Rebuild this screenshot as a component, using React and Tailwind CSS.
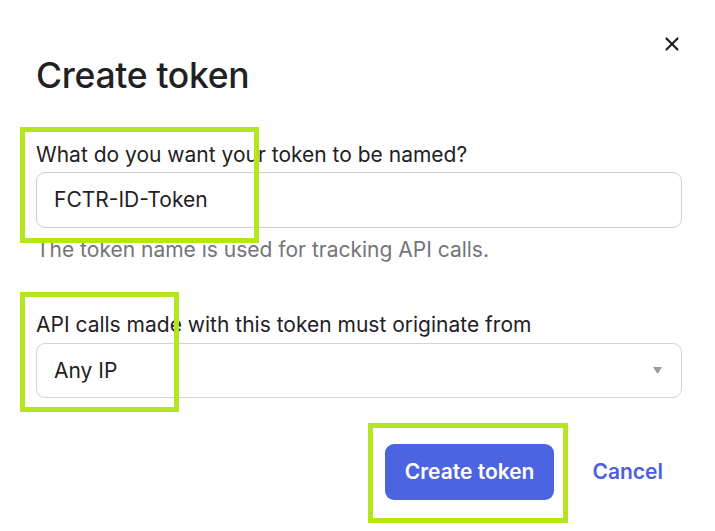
import { X } from "lucide-react";

export default function App() {
  return (
    <div className="relative w-[715px] h-[531px] bg-white text-[#1f2124] font-['Inter',sans-serif] overflow-hidden">
      <div className="pl-9 pr-[33px] pt-[32px]">
        {/* Header */}
        <div className="flex items-start justify-between">
          <h1 className="mt-[22px] text-[35.5px] leading-[44px] font-medium tracking-[-0.3px]">Create token</h1>
          <button className="-mr-[2px] w-[24px] h-[24px] flex items-center justify-center text-[#1f2124]">
            <X size={22} strokeWidth={2.4} />
          </button>
        </div>

        {/* Token name */}
        <label className="block mt-[44px] text-[21px] leading-[26px]">What do you want your token to be named?</label>
        <div className="mt-[4px] h-[56px] border border-[#cfcfcf] rounded-[9px] flex items-center px-[17px] text-[21px]">
          FCTR-ID-Token
        </div>
        <p className="mt-[9px] text-[21px] leading-[26px] text-[#72757a]">The token name is used for tracking API calls.</p>

        {/* Origin */}
        <label className="block mt-[49px] text-[21px] leading-[26px]">API calls made with this token must originate from</label>
        <div className="mt-[5px] h-[55px] border border-[#d4d4d4] rounded-[9px] flex items-center justify-between px-[17px] text-[21px]">
          <span>Any IP</span>
          <svg width="9" height="7" viewBox="0 0 9 7" className="mr-[2px]">
            <path d="M0 0h9L4.5 7z" fill="#9a9a9a" />
          </svg>
        </div>

        {/* Actions */}
        <div className="mt-[46px] flex items-center justify-end gap-[38px] pr-[19px]">
          <button className="h-[56px] px-[20px] rounded-[9px] bg-[#4d64e0] text-white text-[21px] font-semibold">Create token</button>
          <button className="text-[21px] font-semibold text-[#4d5fe0]">Cancel</button>
        </div>
      </div>

      {/* highlight boxes drawn over the form */}
      <div className="absolute left-[20px] top-[127px] w-[239px] h-[116px] border-[5px] border-[#b5e61d]" />
      <div className="absolute left-[20px] top-[292px] w-[159px] h-[120px] border-[5px] border-[#b5e61d]" />
      <div className="absolute left-[368px] top-[423px] w-[200px] h-[100px] border-[5px] border-[#b5e61d]" />
    </div>
  );
}
